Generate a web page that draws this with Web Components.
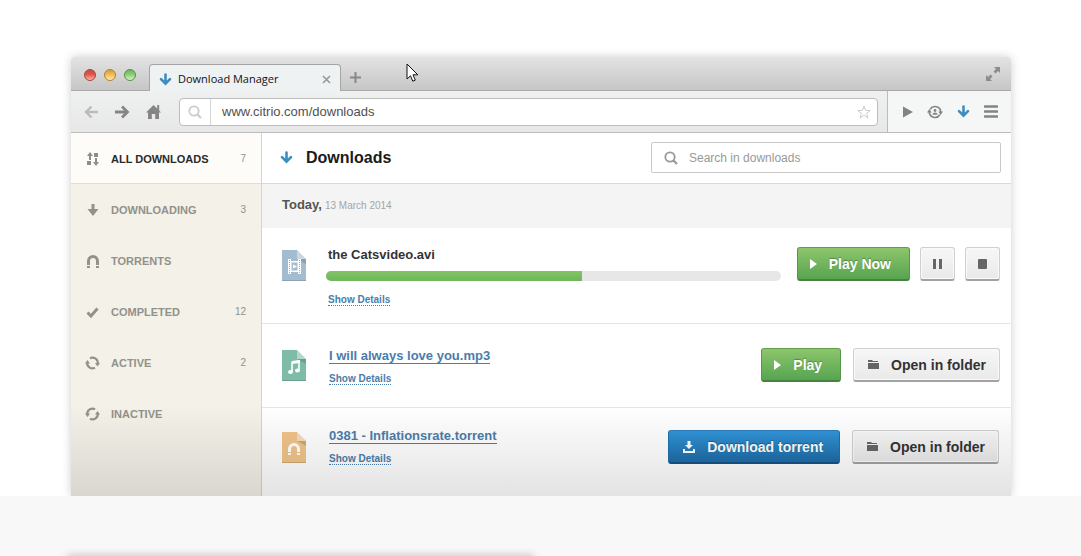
<!DOCTYPE html>
<html lang="en">
<head>
<meta charset="utf-8">
<meta name="viewport" content="width=device-width, initial-scale=1">
<title>Download Manager</title>
<style>
  body { margin: 0; background: #fff; font-family: "Liberation Sans", Arial, sans-serif; color: #333; }
</style>
</head>
<body>
<download-page></download-page>

<script>
const define = (name, html, init) => {
  const template = document.createElement('template');
  template.innerHTML = html;
  customElements.define(name, class extends HTMLElement {
    constructor() {
      super();
      this.attachShadow({ mode: 'open' }).append(template.content.cloneNode(true));
    }
    connectedCallback() { if (init) init(this, this.shadowRoot); }
  });
};

const arrowDown = '<path d="M6.5 1.5V10M2 6.2l4.5 4.500L11 6.200" fill="none" stroke="currentColor" stroke-width="2.6" stroke-linecap="round"/>';
const page = fill => `<path d="M0 0h15l9 9v22H0z" fill="${fill}"/><path d="M15 9h9v5z" fill="#000" opacity=".14"/><path d="M15 0l9 9h-9z" fill="#fff" opacity=".4"/><path d="M0 30h24v1H0z" fill="#000" opacity=".14"/>`;
const icons = {
  arrow: [13, 13, arrowDown],
  back: [16, 14, '<path d="M15 7H3M8.500 1.500L3 7l5.500 5.500" fill="none" stroke="currentColor" stroke-width="2.400"/>'],
  forward: [16, 14, '<path d="M1 7h12.500M8 1.500L13.500 7 8 12.500" fill="none" stroke="currentColor" stroke-width="2.800"/>'],
  home: [16, 16, '<path d="M8.500 1L1 8.500h2V15h3.800v-5h3.400v5H14V8.500h2l-1.800-2V1h-2v3.500z" fill="currentColor"/>'],
  search: [14, 14, '<circle cx="6" cy="6" r="4.700" fill="none" stroke="currentColor" stroke-width="1.800"/><path d="M9.500 9.500l3.500 3.500" stroke="currentColor" stroke-width="2.200"/>'],
  star: [14, 14, '<path d="M7 1l1.600 4.400 4.700.1-3.700 2.900 1.300 4.500L7 10.300l-3.900 2.600 1.300-4.500L.7 5.500l4.700-.1z" fill="none" stroke="currentColor"/>'],
  play: [10, 12, '<path d="M0 .5L10 6 0 11.500z" fill="currentColor"/>'],
  user: [16, 14, '<path d="M3.200 4.200A5.700 5.700 0 0 1 13.700 7M12.800 9.800A5.700 5.700 0 0 1 2.300 7" fill="none" stroke="currentColor" stroke-width="1.700"/><path d="M11.300 6.500H16L13.700 10zM0 7.500h4.700L2.300 4z" fill="currentColor"/><circle cx="8" cy="5.500" r="1.400" fill="currentColor"/><path d="M5.500 9.800c0-3.200 5-3.200 5 0z" fill="currentColor"/>'],
  menu: [14, 13, '<path d="M1 1.500h12M1 6.500h12M1 11.500h12" stroke="currentColor" stroke-width="2.600" stroke-linecap="round"/>'],
  expand: [14, 14, '<path d="M8 0h6v6l-2-2-2.500 2.500-2-2L10 2zM0 8l2 2 2.500-2.500 2 2L4 12l2 2H0z" fill="currentColor"/>'],
  close: [9, 9, '<path d="M1 1l7 7M8 1L1 8" stroke="currentColor" stroke-width="1.600"/>'],
  plus: [11, 11, '<path d="M5.500 0v11M0 5.500h11" stroke="currentColor" stroke-width="2"/>'],
  all: [12, 14, '<path d="M3 0l3 4H4v4H2V4H0zM7 1h4v4H7zM0 9h4v4H0zM8 6h2v4h2l-3 4-3-4h2z" fill="currentColor"/>'],
  down: [12, 12, '<path d="M4.500 0h3v5H11.500L6 12 .5 5h4z" fill="currentColor"/>'],
  magnet: [12, 13, '<path d="M0 10V6a6 6 0 0 1 12 0v4H9V6a3 3 0 0 0-6 0v4zM0 11h3v2H0zM9 11h3v2H9z" fill="currentColor"/>'],
  check: [13, 11, '<path d="M1.500 5.500l3.500 3.500 6.500-7.500" fill="none" stroke="currentColor" stroke-width="3"/>'],
  sync: [15, 14, '<path d="M5 2.200A5.300 5.300 0 0 1 12.800 7M10 11.800A5.300 5.300 0 0 1 2.200 7" fill="none" stroke="currentColor" stroke-width="2.200"/><path d="M10 7h5l-2.500 3.500zM0 7.500h5L2.500 4z" fill="currentColor"/>'],
  resync: [15, 14, '<path d="M2.200 7A5.300 5.300 0 0 1 10 2.200M12.800 7A5.300 5.300 0 0 1 5 11.800" fill="none" stroke="currentColor" stroke-width="2.200"/><path d="M0 6.500h5L2.500 10zM10 7.500h5L12.500 4z" fill="currentColor"/>'],
  folder: [11, 10, '<path d="M0 0h4l1 1h5v1H0zM0 3h11v6H0z" fill="currentColor"/>'],
  save: [12, 12, '<path d="M4.500 0h3v4H10L6 8 2 4h2.500zM0 8h2v2h8V8h2v4H0z" fill="currentColor"/>'],
  start: [7, 10, '<path d="M0 0l7 5-7 5z" fill="currentColor"/>'],
  pause: [9, 10, '<path d="M0 0h3v10H0zM6 0h3v10H6z" fill="currentColor"/>'],
  stop: [9, 10, '<rect width="9" height="10" rx="1" fill="currentColor"/>'],
  video: [24, 31, page('#a3bccf') + '<path d="M6 9h3v2h7V9h3v15h-3v-2H9v2H6z" fill="#fff"/><path d="M9.500 12.500h6v8h-6z" fill="#a3bccf"/><path d="M11 14.500l4 2-4 2z" fill="#fff"/><path d="M7.500 10v14M17.500 10v14" stroke="#8caac0" stroke-dasharray="1 1"/>'],
  music: [24, 31, page('#7fbca7') + '<path d="M10 21v-8.500l7-1.500v8.500" fill="none" stroke="#fff" stroke-width="1.600"/><path d="M10 11l8-1v3l-8 1z" fill="#fff"/><ellipse cx="8.500" cy="22" rx="2.500" ry="2" fill="#fff"/><ellipse cx="15.500" cy="20.500" rx="2.500" ry="2" fill="#fff"/>'],
  torrent: [24, 31, page('#f0c48a') + '<path d="M6 20v-3a6 6 0 0 1 12 0v3h-3v-3a3 3 0 0 0-6 0v3zM6 21h3v2H6zM15 21h3v2h-3z" fill="#fff"/>'],
  pointer: [13, 20, '<path d="M1 1v15l3.500-3.200 2.300 5.400 2.500-1.100L7 11.800h4.800z" fill="#fff" stroke="#111"/>']
};

define('ui-icon', `<style>:host { display: block; flex: none; } svg { display: block; }</style><svg aria-hidden="true"></svg>`, (host, root) => {
  const [w, h, body] = icons[host.getAttribute('name')];
  const svg = root.querySelector('svg');
  svg.setAttribute('viewBox', `0 0 ${w} ${h}`);
  svg.setAttribute('width', w);
  svg.setAttribute('height', h);
  svg.innerHTML = body;
});

define('icon-button', `
<style>
  :host { display: block; flex: none; }
  button { display: grid; place-items: center; margin: 0; padding: 0; border: 0; background: none; color: inherit; }
</style>
<button type="button"></button>`, (host, root) => {
  const button = root.querySelector('button');
  button.innerHTML = `<ui-icon name="${host.getAttribute('icon')}"></ui-icon>`;
  button.setAttribute('aria-label', host.getAttribute('label'));
});

define('push-button', `
<style>
  :host { display: block; flex: none; }
  button { display: flex; align-items: center; gap: 12px; box-sizing: border-box; height: 34px; margin: 0; padding: 0 13px 0 14px;
    border: 1px solid #cfcfcf; border-bottom: 2px solid #a2a2a2; border-radius: 3px; background: linear-gradient(#f7f7f7, #e9e9e9);
    box-shadow: inset 0 0 0 1px #fafafa; color: #333; font: bold 14px/20px "Liberation Sans", Arial, sans-serif; white-space: nowrap; }
  ui-icon { color: #666; }
  :host([kind="green"]) button { padding: 0 18px 0 12px; border-color: #5fa04c #55974a #45843f; background: linear-gradient(#8dc56c, #58a451); box-shadow: none; }
  :host([kind="blue"]) button { padding: 0 16px 0 14px; border-color: #2a7fbd #1f70ad #155384; background: linear-gradient(#3295d9, #1d6ba6); box-shadow: none; }
  :host([kind="green"]) button, :host([kind="blue"]) button { color: #fff; text-shadow: 0 -1px 1px rgba(0,0,0,.3); }
  :host([kind="green"]) ui-icon, :host([kind="blue"]) ui-icon { color: #fff; }
  :host([square]) button { width: 35px; padding: 0; justify-content: center; }
</style>
<button type="button"><slot name="icon"></slot><slot></slot></button>`, (host, root) => {
  if (host.hasAttribute('label')) root.querySelector('button').setAttribute('aria-label', host.getAttribute('label'));
  root.querySelector('slot').innerHTML = `<ui-icon name="${host.getAttribute('icon')}"></ui-icon>`;
  if (host.hasAttribute('square')) root.querySelector('slot:not([name])').remove();
});

define('tab-strip', `
<style>
  :host { display: flex; align-items: flex-end; box-sizing: border-box; height: 34px; padding: 0 11px 0 13px; border-bottom: 1px solid #a9a9a9;
    border-radius: 4px 4px 0 0; background: linear-gradient(#e3e3e3, #c6c6c6); }
  .lights { display: flex; gap: 8px; margin-bottom: 9px; }
  .lights i { box-sizing: border-box; width: 12px; height: 12px; border: 1px solid; border-radius: 50%; }
  .lights .red { border-color: #a5443b; background: linear-gradient(#c84a40, #e0584c 45%, #fbb5a5); }
  .lights .amber { border-color: #b07f33; background: linear-gradient(#d9993d, #f2ba55 45%, #ffecae); }
  .lights .green { border-color: #5a8d4d; background: linear-gradient(#6fb25e, #8bcc78 45%, #d6f7c2); }
  .tab { display: flex; align-items: center; box-sizing: border-box; width: 192px; height: 27px; margin: 0 9px -1px 13px; padding: 2px 9px 0;
    border: 1px solid #a5a5a5; border-bottom: 0; border-radius: 4px 4px 0 0; background: #eff2f2;
    font: 11px/16px "Open Sans", "Noto Sans", sans-serif; color: #111; }
  .tab ui-icon { margin-right: 6px; color: #3d8dc0; }
  .tab span { flex: 1; }
  icon-button { color: #999; }
  .add { margin-bottom: 7px; color: #888; }
  .full { margin: 0 0 9px auto; color: #8c8c8c; }
</style>
<div class="lights"><i class="red"></i><i class="amber"></i><i class="green"></i></div>
<div class="tab"><ui-icon name="arrow"></ui-icon><span><slot></slot></span><icon-button icon="close" label="Close tab"></icon-button></div>
<icon-button class="add" icon="plus" label="New tab"></icon-button>
<icon-button class="full" icon="expand" label="Full screen"></icon-button>`);

define('address-bar', `
<style>
  :host { display: flex; align-items: stretch; box-sizing: border-box; height: 42px; border-bottom: 1px solid #bcbcbc; background: linear-gradient(#eff1f1, #e7e7e7); }
  .nav { display: flex; align-items: center; gap: 15px; padding: 0 18px 0 12px; color: #858585; }
  .nav .off { color: #bbb; }
  .field { display: flex; align-items: center; flex: 1; box-sizing: border-box; height: 28px; margin: 7px 9px 0 0; padding-right: 6px; border: 1px solid #bdbdbd; border-radius: 4px; background: #fff; color: #ccc; }
  .lens { display: grid; place-items: center; align-self: stretch; width: 30px; border-right: 1px solid #d5d5d5; }
  input { flex: 1; min-width: 0; margin: 0; padding: 0 11px; border: 0; outline: 0; background: none; color: #505050; font: 13px/16px "Liberation Sans", Arial, sans-serif; }
  .tools { display: flex; align-items: center; gap: 14px; padding: 0 13px 0 15px; border-left: 1px solid #bcbcbc; background: #f5f6f6; color: #848484; }
  .blue { color: #3d8dc0; }
</style>
<div class="nav"><icon-button class="off" icon="back" label="Back"></icon-button><icon-button icon="forward" label="Forward"></icon-button><icon-button icon="home" label="Home"></icon-button></div>
<div class="field"><div class="lens"><ui-icon name="search"></ui-icon></div><input type="text" aria-label="Address" value="www.citrio.com/downloads"><icon-button icon="star" label="Bookmark"></icon-button></div>
<div class="tools"><icon-button icon="play" label="Play"></icon-button><icon-button icon="user" label="Account"></icon-button><icon-button class="blue" icon="arrow" label="Downloads"></icon-button><icon-button icon="menu" label="Menu"></icon-button></div>`);

define('nav-item', `
<style>
  :host { display: block; }
  a { display: flex; align-items: center; box-sizing: border-box; height: 51px; padding: 2px 15px 0 14px; border-bottom: 1px solid transparent; color: #92918b; font: bold 11px/16px "Liberation Sans", Arial, sans-serif; text-decoration: none; }
  .icon { display: grid; place-items: center; width: 15px; margin-right: 11px; }
  .text { flex: 1; }
  .count { color: #92918b; font-size: 10px; font-weight: normal; }
  :host([current]) a { background: #fdfcf9; border-color: #e0ddd3; color: #2b2b2b; }
  :host([current]) .icon { color: #8e8d87; }
</style>
<a href="#"><span class="icon"></span><span class="text"><slot></slot></span><span class="count"><slot name="count"></slot></span></a>`, (host, root) => {
  root.querySelector('.icon').innerHTML = `<ui-icon name="${host.getAttribute('icon')}"></ui-icon>`;
});

define('side-nav', `
<style>
  :host { display: block; box-sizing: border-box; flex: none; width: 191px; border-right: 1px solid #d5d3cc; background: #f3f1e8; }
</style>
<nav aria-label="Filters"><slot></slot></nav>`);

define('downloads-header', `
<style>
  :host { display: flex; align-items: center; box-sizing: border-box; height: 51px; padding: 0 10px 1px 18px; border-bottom: 1px solid #d9d9d9; background: #fff; }
  ui-icon { color: #3d8dc0; }
  h1 { flex: 1; margin: 0 0 0 13px; color: #1a1a1a; font: bold 16px/20px "Liberation Sans", Arial, sans-serif; }
  label { display: flex; align-items: center; box-sizing: border-box; width: 350px; height: 31px; padding: 0 12px; border: 1px solid #c9c9c9; border-radius: 2px; }
  label ui-icon { color: #999; }
  input { flex: 1; min-width: 0; margin: 0 0 0 11px; padding: 0; border: 0; outline: 0; background: none; font: 12px/16px "Liberation Sans", Arial, sans-serif; }
  input::placeholder { color: #999; opacity: 1; }
</style>
<ui-icon name="arrow"></ui-icon><h1><slot></slot></h1>
<label><ui-icon name="search"></ui-icon><input type="search" aria-label="Search in downloads" placeholder="Search in downloads"></label>`);

define('date-row', `
<style>
  :host { display: flex; align-items: baseline; gap: 3px; box-sizing: border-box; height: 44px; padding: 13px 20px 0; background: #f4f4f4; color: #555; font: bold 13px/16px "Liberation Sans", Arial, sans-serif; }
  time { color: #a5a5a5; font-size: 10px; font-weight: normal; }
</style>
<slot></slot><time datetime="2014-03-13"><slot name="date"></slot></time>`);

define('download-item', `
<style>
  :host { display: flex; align-items: flex-start; padding: 24px 11px 22px 20px; border-bottom: 1px solid #e5e5e5; }
  .icon { margin-top: 2px; }
  .body { flex: 1; min-width: 0; margin: 0 16px 0 20px; }
  h2 { margin: 0 0 0 2px; color: #333; font: bold 13px/16px "Liberation Sans", Arial, sans-serif; }
  h2 a, .more { color: #4a7dab; text-decoration: none; }
  h2 a { display: block; box-sizing: border-box; width: fit-content; height: 16px; margin-left: 1px; border-bottom: 1px solid; line-height: 15px; }
  .more { display: block; width: fit-content; margin: 9px 0 0 3px; border-bottom: 1px dotted; font: bold 10px/11px "Liberation Sans", Arial, sans-serif; }
  progress { display: block; width: 100%; height: 10px; margin: 8px 0 13px; border: 0; border-radius: 5px; overflow: hidden; appearance: none; background: #e7e7e7; }
  progress::-webkit-progress-bar { background: #e7e7e7; }
  progress::-webkit-progress-value { background: linear-gradient(#82c566, #6db65a); }
  .actions { display: flex; gap: 12px; }
  :host([progress]) { padding: 19px 11px 17px 20px; }
  :host([progress]) .icon { margin-top: 3px; }
  :host([progress]) .actions { gap: 10px; }
  :host([progress]) .more { margin: 0 0 0 2px; }
  :host(:last-child) { padding: 20px 12px 31px 20px; border-bottom: 0; }
  :host(:last-child) .icon { margin-top: 4px; }
  :host(:last-child) .actions { margin-top: 2px; }
</style>
<div class="icon"></div>
<div class="body"><h2></h2><a class="more" href="#">Show Details</a></div>
<div class="actions"><slot name="actions"></slot></div>`, (host, root) => {
  root.querySelector('.icon').innerHTML = `<ui-icon name="${host.getAttribute('icon')}"></ui-icon>`;
  const title = root.querySelector('h2');
  if (host.hasAttribute('progress')) {
    title.innerHTML = '<slot></slot>';
    title.insertAdjacentHTML('afterend', `<progress max="1000" value="${host.getAttribute('progress')}" aria-label="Download progress"></progress>`);
  } else title.innerHTML = '<a href="#"><slot></slot></a>';
});

define('browser-window', `
<style>
  :host { display: block; position: relative; border-radius: 4px 4px 0 0; box-shadow: 0 0 10px rgba(0,0,0,.2); background: #fff; }
  .main { display: flex; }
  .content { flex: 1; min-width: 0; }
  .fade { position: absolute; inset: auto 0 0; height: 92px; background: linear-gradient(rgba(0,0,0,0), rgba(0,0,0,.11)); pointer-events: none; }
  .pointer { position: absolute; left: 335px; top: 6px; }
</style>
<slot name="chrome"></slot>
<div class="main"><slot name="side"></slot><div class="content"><slot></slot></div></div>
<div class="fade"></div>
<ui-icon class="pointer" name="pointer"></ui-icon>`);

define('download-page', `
<style>
  :host { display: flex; flex-direction: column; min-height: 100vh; }
  .hero { padding: 57px 70px 0 71px; overflow: hidden; }
  .next { flex: 1; display: flex; align-items: flex-end; padding: 0 70px; background: #f8f8f8; }
  .card { width: 49%; height: 1px; box-shadow: 0 3px 9px 2px rgba(0,0,0,.3); background: #ddd; }
</style>
<div class="hero">
<browser-window>
  <tab-strip slot="chrome">Download Manager</tab-strip>
  <address-bar slot="chrome"></address-bar>
  <side-nav slot="side">
    <nav-item icon="all" current>ALL DOWNLOADS<span slot="count">7</span></nav-item>
    <nav-item icon="down">DOWNLOADING<span slot="count">3</span></nav-item>
    <nav-item icon="magnet">TORRENTS</nav-item>
    <nav-item icon="check">COMPLETED<span slot="count">12</span></nav-item>
    <nav-item icon="sync">ACTIVE<span slot="count">2</span></nav-item>
    <nav-item icon="resync">INACTIVE</nav-item>
  </side-nav>
  <downloads-header>Downloads</downloads-header>
  <date-row>Today,<span slot="date">13 March 2014</span></date-row>
  <download-item icon="video" progress="563">the Catsvideo.avi
    <push-button slot="actions" kind="green" icon="start">Play Now</push-button>
    <push-button slot="actions" square icon="pause" label="Pause"></push-button>
    <push-button slot="actions" square icon="stop" label="Stop"></push-button>
  </download-item>
  <download-item icon="music">I will always love you.mp3<push-button slot="actions" kind="green" icon="start">Play</push-button><push-button slot="actions" icon="folder">Open in folder</push-button></download-item>
  <download-item icon="torrent">0381 - Inflationsrate.torrent<push-button slot="actions" kind="blue" icon="save">Download torrent</push-button><push-button slot="actions" icon="folder">Open in folder</push-button></download-item>
</browser-window>
</div>
<div class="next"><div class="card"></div></div>`);
</script>
</body>
</html>
